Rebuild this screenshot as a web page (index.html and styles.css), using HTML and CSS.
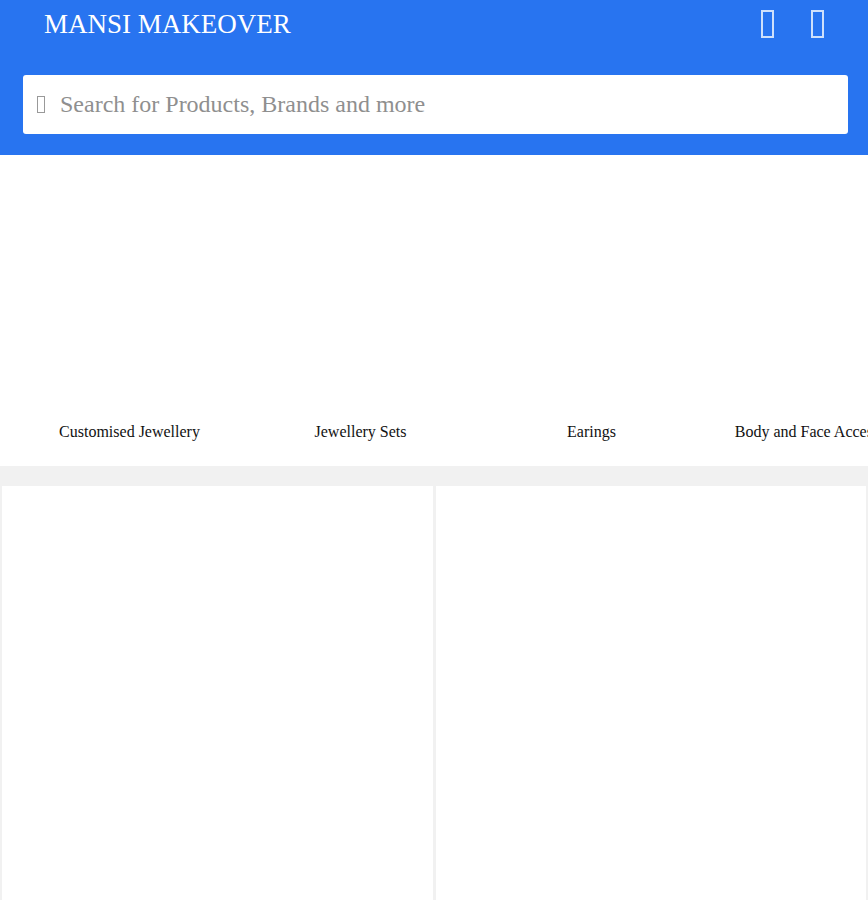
FILE: index.html
```html
<!DOCTYPE html>
<html lang="en">
<head>
  <meta charset="UTF-8">
  <meta name="viewport" content="width=device-width, initial-scale=1.0">
  <title>Mansi Makeover</title>
  <link rel="stylesheet" href="styles.css">
</head>
<body>
  <!-- header -->
  <header class="header">
    <div class="topbar">
      <a class="logo" href="#">MANSI MAKEOVER</a>
      <div class="top-icons">
        <span class="tofu tofu-top"></span>
        <span class="tofu tofu-top"></span>
      </div>
    </div>
    <div class="search">
      <span class="tofu tofu-search"></span>
      <input class="search-input" type="text" placeholder="Search for Products, Brands and more">
    </div>
  </header>

  <!-- categories -->
  <section class="categories">
    <div class="category"><div class="category-pic"></div><p>Customised Jewellery</p></div>
    <div class="category"><div class="category-pic"></div><p>Jewellery Sets</p></div>
    <div class="category"><div class="category-pic"></div><p>Earings</p></div>
    <div class="category"><div class="category-pic"></div><p>Body and Face Accessories</p></div>
  </section>

  <!-- products -->
  <section class="products">
    <div class="product"></div>
    <div class="product"></div>
  </section>
</body>
</html>
```

FILE: styles.css
```css
* {
  box-sizing: border-box;
  margin: 0;
  padding: 0;
}
html, body {
  height: 100%;
  overflow: hidden;
}
body {
  background: #f1f1f1;
  font-family: "Liberation Serif", serif;
}
/* header */
.header {
  height: 155px;
  padding: 0 20px 0 23px;
  background: #2874f0;
}
.topbar {
  display: flex;
  align-items: center;
  justify-content: space-between;
  height: 75px;
  padding: 0 24px 27px 21px;
}
.logo {
  color: #fff;
  font-size: 27px;
  text-decoration: none;
}
.top-icons {
  display: flex;
  gap: 37px;
}
.tofu {
  display: block;
  border: 1px solid currentColor;
}
.tofu-top {
  width: 13px;
  height: 28px;
  border-width: 2px;
  color: #cfe0fb;
}
/* search */
.search {
  display: flex;
  align-items: center;
  gap: 15px;
  height: 59px;
  padding-left: 14px;
  background: #fff;
  border-radius: 3px;
}
.tofu-search {
  flex: none;
  width: 8px;
  height: 17px;
  color: #999;
}
.search-input {
  flex: 1;
  min-width: 0;
  border: none;
  outline: none;
  font-family: inherit;
  font-size: 24px;
}
.search-input::placeholder {
  color: #8f8f8f;
  opacity: 1;
}
/* categories */
.categories {
  display: flex;
  height: 311px;
  overflow: hidden;
  padding-left: 14px;
  background: #fff;
}
.category {
  flex: none;
  width: 231px;
  text-align: center;
}
.category-pic {
  height: 265px;
}
.category p {
  font-size: 16px;
  line-height: 24px;
  white-space: nowrap;
  color: #111;
}
/* products */
.products {
  display: grid;
  grid-template-columns: 431px 430px;
  gap: 3px;
  height: 414px;
  margin-top: 20px;
  padding-left: 2px;
}
.product {
  background: #fff;
}
```
